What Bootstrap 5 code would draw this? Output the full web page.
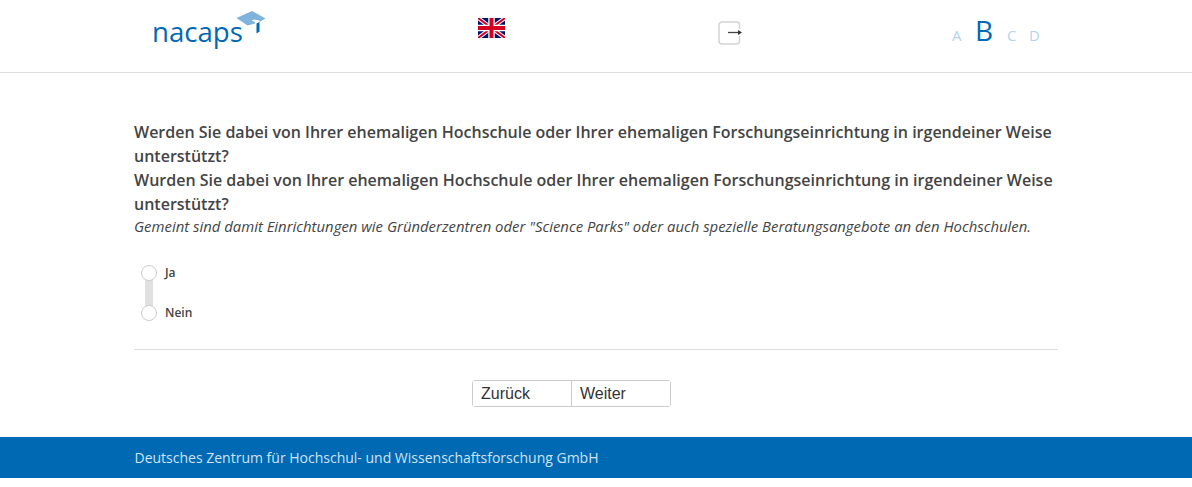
<!DOCTYPE html>
<html lang="de">
<head>
<meta charset="utf-8">
<title>nacaps</title>
<link rel="stylesheet" href="https://cdn.jsdelivr.net/npm/bootstrap@5.3.0/dist/css/bootstrap.min.css">
<style>
body{font-family:"Open Sans",sans-serif;color:#444;background:#fff;}
.top-bar{height:73px;border-bottom:1px solid #ddd;}
.top-inner{width:1192px;height:72px;}
.logo-cell{width:478px;padding-left:153px;}
.logo-box{width:113px;height:40px;margin-top:10px;position:relative;}
.logo-word{position:absolute;left:-1px;top:3px;font-size:27.6px;line-height:36px;color:#0069b4;}
.logo-cap{position:absolute;left:80px;top:0;}
.flag-cell{width:240px;padding-top:18px;}
.exit-cell{width:234px;padding-top:21px;}
.flag-img,.exit-img{display:block;}
.size-cell{padding-top:13px;}
.size-link{color:#b3d3ec;font-size:14.88px;line-height:34px;text-decoration:none;}
.size-on{color:#0069b4;font-size:28px;font-weight:500;margin:0 14px 0 13.5px;}
.size-c{margin-right:12.5px;}
.page-body{width:924px;margin-left:134px;padding-top:47px;}
.q-title{font-size:16px;font-weight:600;line-height:24px;margin:0;}
.q-note{font-size:14.88px;font-style:italic;line-height:20px;margin:0;}
.choices{margin-top:27px;position:relative;height:60px;}
.choice-row{height:20px;margin-bottom:20px;gap:8px;padding-left:7px;position:relative;}
.track{position:absolute;left:11px;top:10px;width:8px;height:40px;background:#e0e0e0;}
.dot{width:16px;height:16px;border:1px solid #ccc;border-radius:50%;background:#fff;flex:none;}
.choice-label{font-size:12px;font-weight:600;line-height:20px;}
.divider{border-top:1px solid #ddd;margin-top:26px;}
.pager{margin-top:30px;padding-left:338px;}
.pager-group{width:199px;height:27px;border:1px solid #ccc;border-radius:3px;}
.pager-btn{width:98px;background:#fff;border:0;padding:0 0 0 8px;text-align:left;font-family:"Liberation Sans",sans-serif;font-size:16px;line-height:25px;color:#333;}
.pager-btn+.pager-btn{width:99px;border-left:1px solid #ccc;}
.foot-bar{margin-top:30px;height:41px;background:#0069b4;padding-left:134.5px;color:#cfe3f3;font-size:14px;line-height:41px;}
</style>
</head>
<body>
<header class="top-bar">
  <div class="top-inner d-flex">
    <div class="logo-cell">
      <div class="logo-box">
        <span class="logo-word">nacaps</span>
        <svg class="logo-cap" width="33" height="26" viewBox="0 0 33 26">
          <path d="M3.500 8 19 1 32.500 8.500 26.500 12V10.500L21.500 9.500 18.500 10.500 22 12V13.500L14.500 15.500Z" fill="#7fb2dc"/>
          <path d="M23.500 13.500 26.500 12V21.500L23.500 23.500Z" fill="#0069b4"/>
        </svg>
      </div>
    </div>
    <div class="flag-cell">
      <svg class="flag-img" width="27" height="20" viewBox="0 0 27 20">
        <rect width="27" height="20" fill="#00126b"/>
        <path d="M0 0 27 20M27 0 0 20" stroke="#fff" stroke-width="4"/>
        <path d="M0 0 27 20M27 0 0 20" stroke="#d3001f" stroke-width="2"/>
        <path d="M13.500 0V20M0 10H27" stroke="#fff" stroke-width="6.500"/>
        <path d="M13.500 0V20M0 10H27" stroke="#d3001f" stroke-width="4"/>
      </svg>
    </div>
    <div class="exit-cell">
      <svg class="exit-img" width="24" height="24" viewBox="0 0 24 24">
        <path d="M21.500 8V4a3 3 0 0 0-3-3H4a3 3 0 0 0-3 3v16a3 3 0 0 0 3 3h14.500a3 3 0 0 0 3-3v-5" fill="none" stroke="#d4d4d4" stroke-width="1.500"/>
        <path d="M10 11.500h10" stroke="#444" stroke-width="1.300"/>
        <path d="M20 9 24 11.500 20 14z" fill="#333"/>
      </svg>
    </div>
    <div class="size-cell d-flex align-items-baseline">
      <a class="size-link" href="#">A</a>
      <a class="size-link size-on" href="#">B</a>
      <a class="size-link size-c" href="#">C</a>
      <a class="size-link" href="#">D</a>
    </div>
  </div>
</header>
<main class="page-body">
  <p class="q-title">Werden Sie dabei von Ihrer ehemaligen Hochschule oder Ihrer ehemaligen Forschungseinrichtung in irgendeiner Weise unterstützt?</p>
  <p class="q-title">Wurden Sie dabei von Ihrer ehemaligen Hochschule oder Ihrer ehemaligen Forschungseinrichtung in irgendeiner Weise unterstützt?</p>
  <p class="q-note">Gemeint sind damit Einrichtungen wie Gründerzentren oder "Science Parks" oder auch spezielle Beratungsangebote an den Hochschulen.</p>
  <div class="choices">
    <div class="track"></div>
    <div class="choice-row d-flex align-items-center"><span class="dot"></span><span class="choice-label">Ja</span></div>
    <div class="choice-row d-flex align-items-center"><span class="dot"></span><span class="choice-label">Nein</span></div>
  </div>
  <div class="divider"></div>
  <div class="pager d-flex">
    <div class="pager-group d-flex">
      <button class="pager-btn" type="button">Zurück</button>
      <button class="pager-btn" type="button">Weiter</button>
    </div>
  </div>
</main>
<footer class="foot-bar">Deutsches Zentrum für Hochschul- und Wissenschaftsforschung GmbH</footer>
</body>
</html>
